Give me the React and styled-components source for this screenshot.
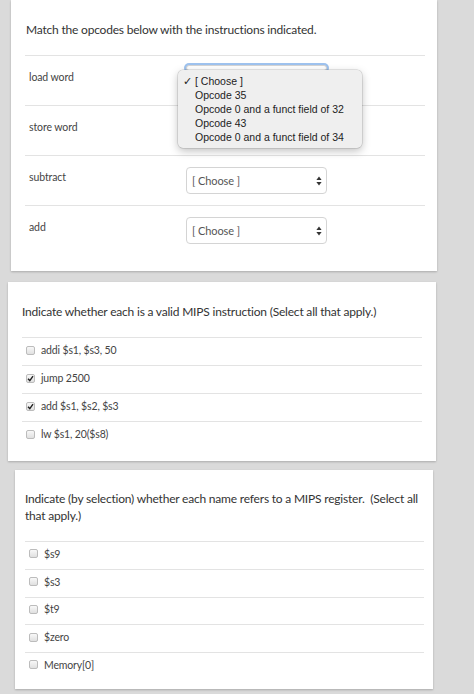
import React from "react";
import styled, { createGlobalStyle } from "styled-components";

const Global = createGlobalStyle`
    html, body {
        margin: 0;
        padding: 0;
        background: #dadada;
    }
    body {
        font-family: Lato, "Open Sans", sans-serif;
        color: #3a3a3a;
    }
`

const Page = styled.div`
    display: flex;
    flex-direction: column;
    width: 474px;
    height: 694px;
    overflow: hidden;
`

const Card = styled.div`
    background: #fff;
    margin-left: ${p => p.left}px;
    width: ${p => p.width}px;
    margin-top: ${p => p.gap || 0}px;
    padding: ${p => p.pt}px ${p => p.pr}px ${p => p.pb}px ${p => p.pl}px;
    box-sizing: border-box;
    box-shadow: 0 1px 2px rgba(0, 0, 0, 0.22);
    flex-shrink: 0;
`

const Question = styled.p`
    margin: 0 0 17px;
    font-size: 12px;
    letter-spacing: -0.2px;
    line-height: 17px;
    color: #333;
    white-space: nowrap;
    padding-left: ${p => p.indent || 0}px;
`

const MatchRow = styled.div`
    display: flex;
    align-items: flex-start;
    height: 50px;
    box-sizing: border-box;
    border-top: 1px solid #e3e3e3;
    padding-top: 11px;
`

const Label = styled.div`
    width: 157px;
    padding: 3px 0 0 4px;
    font-size: 10.5px;
    letter-spacing: -0.1px;
    line-height: 14px;
    color: #444;
`

const SelectWrap = styled.div`
    position: relative;
`

const Select = styled.div`
    width: 141px;
    height: 27px;
    box-sizing: border-box;
    border: 1px solid #d4d4d4;
    border-radius: 4px;
    display: flex;
    align-items: center;
    justify-content: space-between;
    padding: 0 4px 0 5px;
    font-size: 11px;
    letter-spacing: -0.1px;
    color: #555;
    background: #fff;
    box-shadow: ${p => p.focus ? "0 0 0 2px #9ec2ee" : "none"};
`

const Menu = styled.ul`
    position: absolute;
    left: -8px;
    top: 3px;
    width: 184px;
    margin: 0;
    padding: 5px 0 3px;
    list-style: none;
    background: #efefef;
    border-radius: 5px;
    box-shadow: 0 0 0 0.5px rgba(0, 0, 0, 0.18), 0 3px 9px rgba(0, 0, 0, 0.25);
    font-family: "Liberation Sans", Arial, sans-serif;
    font-size: 10.5px;
    line-height: 13.9px;
    color: #222;
    z-index: 2;
`

const MenuItem = styled.li`
    position: relative;
    padding-left: 17px;
    white-space: nowrap;
`

const Tick = styled.span`
    position: absolute;
    left: 5px;
    top: 0;
`

const OptionRow = styled.label`
    display: flex;
    align-items: center;
    gap: 6px;
    height: ${p => p.h || 28}px;
    box-sizing: border-box;
    border-top: 1px solid #e3e3e3;
    padding: 0 0 3px 4px;
    font-size: 10.5px;
    letter-spacing: -0.15px;
    color: #444;
`

const Box = styled.span`
    width: 9px;
    height: 9px;
    box-sizing: border-box;
    border: 1px solid #bcbcbc;
    border-radius: 2px;
    background: linear-gradient(#f8f8f8, #e0e0e0);
    display: flex;
    align-items: center;
    justify-content: center;
    flex-shrink: 0;
`

const Arrows = () => (
    <svg width="6" height="10" viewBox="0 0 6 10">
        <path d="M3 0.5 L5.6 4 H0.4 Z" fill="#333" />
        <path d="M3 9.5 L5.6 6 H0.4 Z" fill="#333" />
    </svg>
)

const Check = () => (
    <svg width="7" height="7" viewBox="0 0 7 7">
        <path d="M1 3.8 L2.8 5.6 L6 1.2" fill="none" stroke="#222" strokeWidth="1.4" />
    </svg>
)

const Checkbox = ({ checked }) => (
    <Box>{checked && <Check />}</Box>
)

const opcodes = [
    "[ Choose ]",
    "Opcode 35",
    "Opcode 0 and a funct field of 32",
    "Opcode 43",
    "Opcode 0 and a funct field of 34",
]

const instructions = [
    ["addi $s1, $s3, 50", false],
    ["jump 2500", true],
    ["add $s1, $s2, $s3", true],
    ["lw $s1, 20($s8)", false],
]

const registers = ["$s9", "$s3", "$t9", "$zero", "Memory[0]"]

const App = () => (
    <Page>
        <Global />
        <Card left={11} width={426} pt={21} pr={12} pb={16} pl={14}>
            <Question indent={1}>Match the opcodes below with the instructions indicated.</Question>
            <MatchRow>
                <Label>load word</Label>
                <SelectWrap>
                    <Select focus style={{ height: "6px", marginTop: "-2px" }} />
                    <Menu>
                        {opcodes.map((o, i) => (
                            <MenuItem key={o}>
                                {i === 0 && <Tick>✓</Tick>}
                                {o}
                            </MenuItem>
                        ))}
                    </Menu>
                </SelectWrap>
            </MatchRow>
            <MatchRow>
                <Label>store word</Label>
            </MatchRow>
            <MatchRow>
                <Label>subtract</Label>
                <Select>[ Choose ]<Arrows /></Select>
            </MatchRow>
            <MatchRow>
                <Label>add</Label>
                <Select>[ Choose ]<Arrows /></Select>
            </MatchRow>
        </Card>

        <Card left={8} width={428} gap={11} pt={21} pr={14} pb={12} pl={14}>
            <Question>Indicate whether each is a valid MIPS instruction (Select all that apply.)</Question>
            {instructions.map(([text, checked]) => (
                <OptionRow key={text}>
                    <Checkbox checked={checked} />
                    {text}
                </OptionRow>
            ))}
        </Card>

        <Card left={15} width={418} gap={9} pt={20} pr={9} pb={9} pl={10}>
            <Question>
                Indicate (by selection) whether each name refers to a MIPS register.&nbsp; (Select all
                <br />
                that apply.)
            </Question>
            {registers.map(r => (
                <OptionRow key={r} h={27.75}>
                    <Checkbox />
                    {r}
                </OptionRow>
            ))}
        </Card>
    </Page>
)

export default App
